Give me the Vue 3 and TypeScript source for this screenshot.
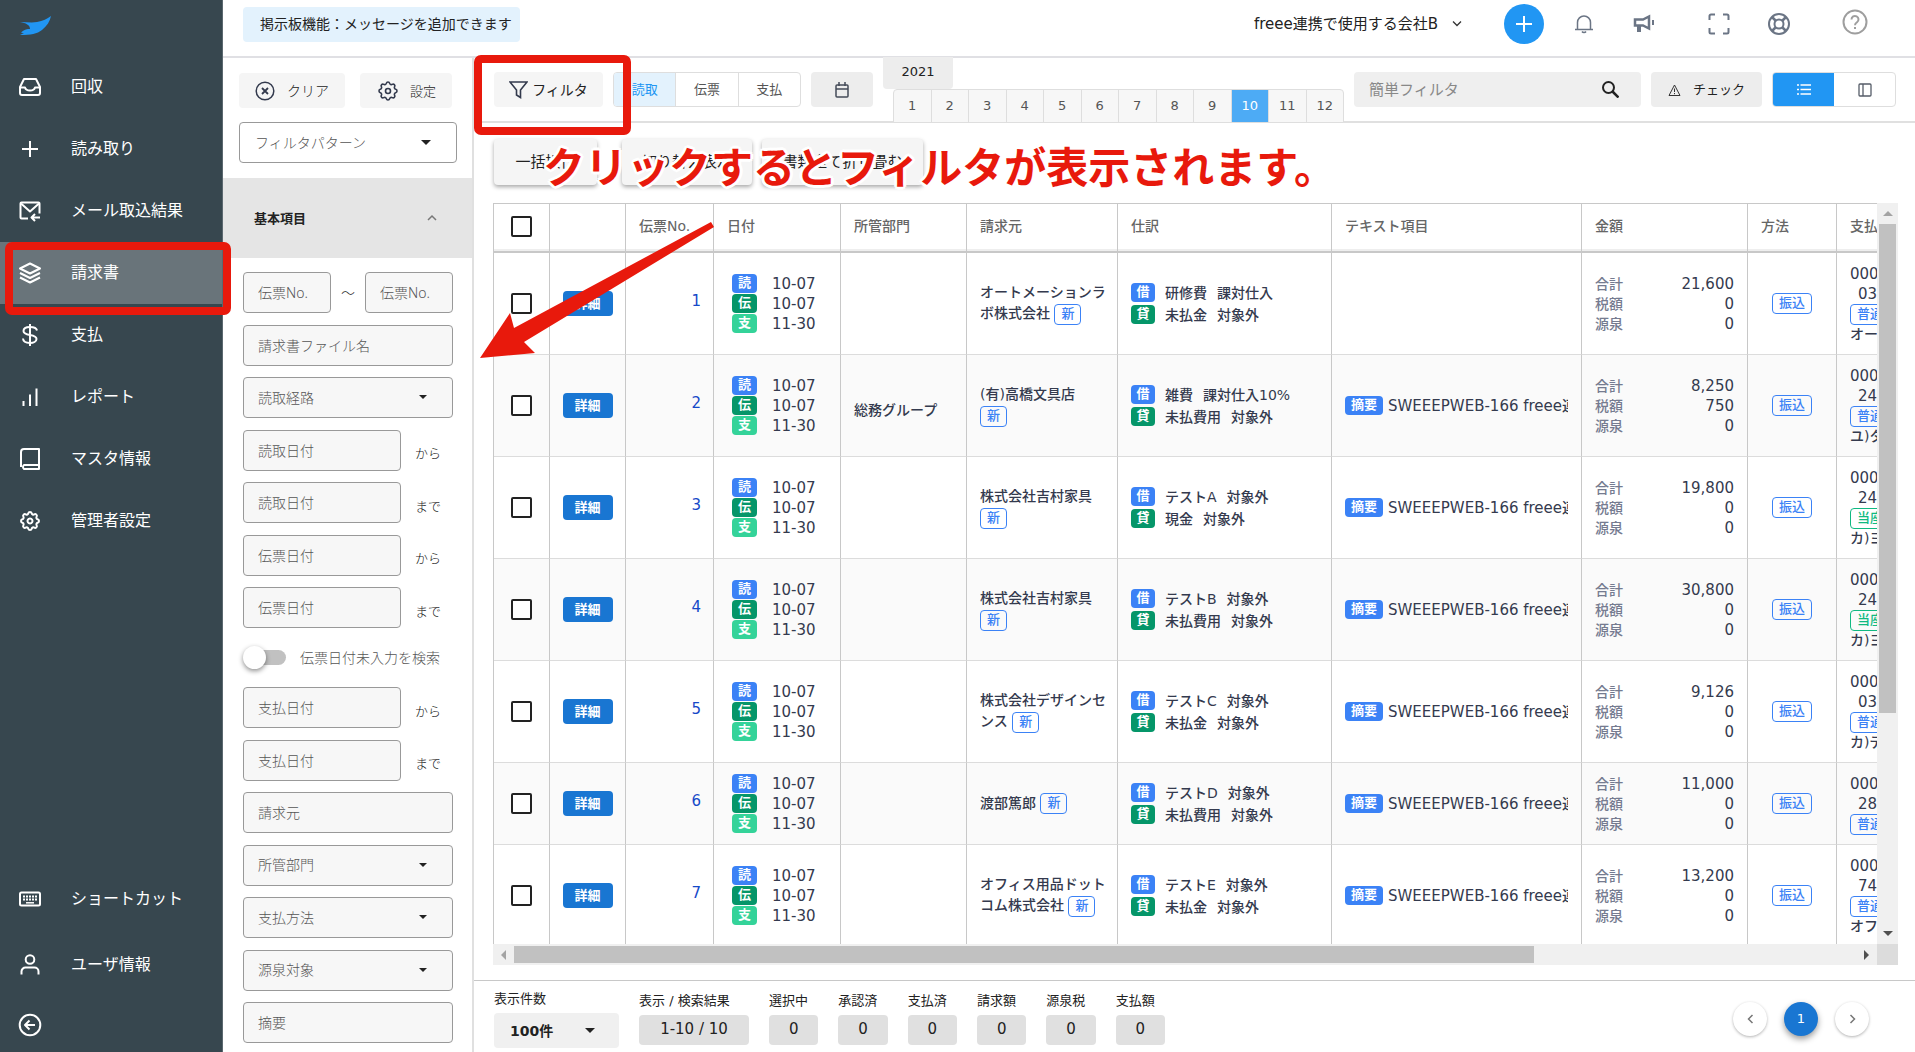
<script setup lang="ts">
import { ref } from 'vue'

interface NavItem {
  label: string
  paths: string[]
  active?: boolean
}

interface Row {
  no: number
  dept: string
  client: string
  debit: string[]
  credit: string[]
  memo: boolean
  amounts: string[]
  bank: string
  branch: string
  kind: string
  holder: string
  short?: boolean
}

const gear =
  'M10.325 4.317c.426-1.756 2.924-1.756 3.35 0a1.724 1.724 0 0 0 2.573 1.066c1.543-.94 3.31.826 2.37 2.37a1.724 1.724 0 0 0 1.065 2.572c1.756.426 1.756 2.924 0 3.35a1.724 1.724 0 0 0-1.066 2.573c.94 1.543-.826 3.31-2.37 2.37a1.724 1.724 0 0 0-2.572 1.065c-.426 1.756-2.924 1.756-3.35 0a1.724 1.724 0 0 0-2.573-1.066c-1.543.94-3.31-.826-2.37-2.37a1.724 1.724 0 0 0-1.065-2.572c-1.756-.426-1.756-2.924 0-3.35a1.724 1.724 0 0 0 1.066-2.573c-.94-1.543.826-3.31 2.37-2.37 1 .608 2.296.07 2.572-1.065z'

const mainNav: NavItem[] = [
  { label: '回収', paths: ['M6 4h12l4 8v6a2 2 0 0 1-2 2H4a2 2 0 0 1-2-2v-6z', 'M2 12.500h5c.5 1.800 1.500 3 5 3s4.500-1.200 5-3h5'] },
  { label: '読み取り', paths: ['M12 4v16M4 12h16'] },
  { label: 'メール取込結果', paths: ['M10 19.500H3.500a1 1 0 0 1-1-1v-14a1 1 0 0 1 1-1h17a1 1 0 0 1 1 1v10', 'M3 4.500l9 8 9-8', 'M22 18.500h-8M17 15l-3.500 3.500L17 22'] },
  { label: '請求書', paths: ['M12 2.500l10 5-10 5-10-5z', 'M2 12l10 5 10-5', 'M2 16.500l10 5 10-5'], active: true },
  { label: '支払', paths: ['M12 1v22', 'M19 7.500C18.500 5 15.500 4 12 4 8 4 5.500 5.500 5.500 8c0 5.500 13 2.500 13 8 0 2.500-3 4-6.500 4-4 0-6.800-1.500-7-4.500'] },
  { label: 'レポート', paths: ['M5.500 21v-5M12 21V9.500M18.500 21V3.500'] },
  { label: 'マスタ情報', paths: ['M21 18H6a2.500 2.500 0 0 0 0 4h15V2H6a3 3 0 0 0-3 3v15'] },
  { label: '管理者設定', paths: [gear, 'M12 9.500a2.500 2.500 0 1 0 .01 0z'] },
]

const months = Array.from({ length: 12 }, (_, i) => i + 1)
const activeMonth = ref(10)
const basis = ref('読取')

const rows: Row[] = [
  { no: 1, dept: '', client: 'オートメーションラ\nボ株式会社', debit: ['研修費', '課対仕入'], credit: ['未払金', '対象外'], memo: false, amounts: ['21,600', '0', '0'], bank: '0001', branch: '032', kind: '普通', holder: 'オート' },
  { no: 2, dept: '総務グループ', client: '(有)高橋文具店\n', debit: ['雑費', '課対仕入10%'], credit: ['未払費用', '対象外'], memo: true, amounts: ['8,250', '750', '0'], bank: '0001', branch: '240', kind: '普通', holder: 'ユ)タ' },
  { no: 3, dept: '', client: '株式会社吉村家具\n', debit: ['テストA', '対象外'], credit: ['現金', '対象外'], memo: true, amounts: ['19,800', '0', '0'], bank: '0001', branch: '240', kind: '当座', holder: 'カ)ヨ' },
  { no: 4, dept: '', client: '株式会社吉村家具\n', debit: ['テストB', '対象外'], credit: ['未払費用', '対象外'], memo: true, amounts: ['30,800', '0', '0'], bank: '0001', branch: '240', kind: '当座', holder: 'カ)ヨ' },
  { no: 5, dept: '', client: '株式会社デザインセ\nンス', debit: ['テストC', '対象外'], credit: ['未払金', '対象外'], memo: true, amounts: ['9,126', '0', '0'], bank: '0001', branch: '032', kind: '普通', holder: 'カ)デ' },
  { no: 6, dept: '', client: '渡部篤郎', debit: ['テストD', '対象外'], credit: ['未払費用', '対象外'], memo: true, amounts: ['11,000', '0', '0'], bank: '0001', branch: '280', kind: '普通', holder: '', short: true },
  { no: 7, dept: '', client: 'オフィス用品ドット\nコム株式会社', debit: ['テストE', '対象外'], credit: ['未払金', '対象外'], memo: true, amounts: ['13,200', '0', '0'], bank: '0001', branch: '740', kind: '普通', holder: 'オフィ' },
]

const dates = [
  { mark: '読', cls: 'blue', value: '10-07' },
  { mark: '伝', cls: 'green', value: '10-07' },
  { mark: '支', cls: 'mint', value: '11-30' },
]
const amountLabels = ['合計', '税額', '源泉']
const headings = ['伝票No.', '日付', '所管部門', '請求元', '仕訳', 'テキスト項目', '金額', '方法', '支払先']

const upperDates = [
  { label: '読取日付', suffix: 'から' },
  { label: '読取日付', suffix: 'まで' },
  { label: '伝票日付', suffix: 'から' },
  { label: '伝票日付', suffix: 'まで' },
]
const lowerDates = [
  { label: '支払日付', suffix: 'から' },
  { label: '支払日付', suffix: 'まで' },
]
const lowerSelects = ['所管部門', '支払方法', '源泉対象']
const totals = ['選択中', '承認済', '支払済', '請求額', '源泉税', '支払額']
</script>

<template>
  <div class="app">
    <aside class="sidebar">
      <a class="logo" href="#" aria-label="ホーム">
        <svg width="32" height="22" viewBox="0 0 32 22">
          <path d="M1 6c6 0 12 1 17 0 6-1 10-3 14-6-1 5-4 10-9 14-5 4-11 5-22 5l4-2c-1 0-2 0-3-.5 2-2 4-3 7-3.500l2 0c0-4-4-6-10-7z" fill="#2196f3" />
        </svg>
      </a>
      <nav class="nav">
        <a v-for="item in mainNav" :key="item.label" href="#" :class="['nav-item', { active: item.active }]">
          <svg class="nav-icon" viewBox="0 0 24 24"><path v-for="d in item.paths" :key="d" :d="d" /></svg>
          <span>{{ item.label }}</span>
        </a>
      </nav>
      <nav class="nav nav-bottom">
        <a href="#" class="nav-item">
          <svg class="nav-icon" viewBox="0 0 24 24">
            <rect x="2" y="5.500" width="20" height="13" rx="1.500" />
            <path d="M5 9.500h14M5 12.500h14" stroke-dasharray="2 1" /><path d="M8 15.800h8" stroke-width="1.500" />
          </svg>
          <span>ショートカット</span>
        </a>
        <a href="#" class="nav-item">
          <svg class="nav-icon" viewBox="0 0 24 24"><circle cx="12" cy="6.500" r="4.300" /><path d="M3.500 21.500v-3a4 4 0 0 1 4-4h9a4 4 0 0 1 4 4v3" /></svg>
          <span>ユーザ情報</span>
        </a>
        <a href="#" class="nav-item collapse" aria-label="メニューを閉じる">
          <svg class="nav-icon" viewBox="0 0 24 24"><circle cx="12" cy="12" r="10.300" /><path d="M17 12H7.500M11.500 7.500L7 12l4.500 4.500" /></svg>
        </a>
      </nav>
    </aside>

    <div class="page">
      <header class="topbar">
        <div class="notice">掲示板機能：メッセージを追加できます</div>
        <button class="company">
          freee連携で使用する会社B
          <svg width="10" height="8" viewBox="0 0 10 8"><path d="M1 1.500l4 4 4-4" fill="none" stroke="#333" stroke-width="1.300" /></svg>
        </button>
        <button class="add" aria-label="追加">
          <svg width="18" height="18" viewBox="0 0 18 18"><path d="M9 1v16M1 9h16" stroke="#fff" stroke-width="2" /></svg>
        </button>
        <div class="top-icons">
          <button aria-label="お知らせ">
            <svg width="20" height="20" viewBox="0 0 20 20" fill="none" stroke="#6b7585" stroke-width="1.500"><path d="M1 15.500h18M3.500 15V8.500a6.500 6.500 0 0 1 13 0V15" /><path d="M8 17.500c.8 1.300 3.200 1.300 4 0" /></svg>
          </button>
          <button aria-label="お知らせ一覧">
            <svg width="22" height="20" viewBox="0 0 22 20" fill="none" stroke="#6b7585" stroke-width="2.500"><path d="M2 5.500h8l6-3v12l-6-3H2z" /><path d="M6 11.500V18" stroke-width="4" /><path d="M20 6v5" stroke-width="2" /></svg>
          </button>
          <button class="screen" aria-label="全画面">
            <svg width="22" height="22" viewBox="0 0 22 22" fill="none" stroke="#6b7585" stroke-width="2"><path d="M1.500 7V3a1.500 1.500 0 0 1 1.500-1.500h4M15 1.500h4A1.500 1.500 0 0 1 20.500 3v4M20.500 15v4a1.500 1.500 0 0 1-1.500 1.500h-4M7 20.500H3A1.500 1.500 0 0 1 1.500 19v-4" /></svg>
          </button>
          <button aria-label="サポート">
            <svg width="22" height="22" viewBox="0 0 22 22" fill="none" stroke="#6b7585" stroke-width="2"><circle cx="11" cy="11" r="10" /><circle cx="11" cy="11" r="4.500" /><path d="M4 4l4 4M18 4l-4 4M4 18l4-4M18 18l-4-4" stroke-width="2.500" /></svg>
          </button>
          <button class="help" aria-label="ヘルプ">
            <svg width="26" height="26" viewBox="0 0 26 26" fill="none" stroke="#9e9e9e" stroke-width="2"><circle cx="13" cy="13" r="11.500" /><path d="M9.500 10.500a3.500 3.500 0 1 1 5.500 2.800c-1.300.9-2 1.500-2 3M13 18v2" /></svg>
          </button>
        </div>
      </header>

      <div class="body">
        <section class="filters">
          <div class="filter-actions">
            <button class="soft clear">
              <svg width="20" height="20" viewBox="0 0 20 20" fill="none" stroke="#333a4d" stroke-width="1.500"><circle cx="10" cy="10" r="8.800" /><path d="M7 7l6 6M13 7l-6 6" stroke-width="1.800" /></svg>
              クリア
            </button>
            <button class="soft config">
              <svg width="24" height="24" viewBox="0 0 24 24" fill="none" stroke="#333a4d" stroke-width="1.600"><path :d="gear" /><circle cx="12" cy="12" r="2.500" /></svg>
              設定
            </button>
          </div>
          <div class="select-wrap pattern">
            <select class="field" aria-label="フィルタパターン"><option>フィルタパターン</option></select>
            <svg class="caret" width="10" height="5" viewBox="0 0 10 5"><path d="M0 0h10L5 5z" /></svg>
          </div>
          <button class="section-head">
            基本項目
            <svg width="10" height="8" viewBox="0 0 10 8"><path d="M1 6l4-4 4 4" fill="none" stroke="#777" stroke-width="1.500" /></svg>
          </button>
          <div class="fields">
            <div class="pair">
              <input class="field" placeholder="伝票No." aria-label="伝票No. 開始" />
              <span>～</span>
              <input class="field" placeholder="伝票No." aria-label="伝票No. 終了" />
            </div>
            <input class="field" placeholder="請求書ファイル名" aria-label="請求書ファイル名" />
            <div class="select-wrap">
              <select class="field" aria-label="読取経路"><option>読取経路</option></select>
              <svg class="caret" width="8" height="4" viewBox="0 0 8 4"><path d="M0 0h8L4 4z" /></svg>
            </div>
            <label v-for="(d, i) in upperDates" :key="'u' + i" class="date">
              <input class="field" :placeholder="d.label" />
              <span>{{ d.suffix }}</span>
            </label>
            <label class="switch"><input type="checkbox" />伝票日付未入力を検索</label>
            <label v-for="(d, i) in lowerDates" :key="'l' + i" class="date">
              <input class="field" :placeholder="d.label" />
              <span>{{ d.suffix }}</span>
            </label>
            <input class="field" placeholder="請求元" aria-label="請求元" />
            <div v-for="s in lowerSelects" :key="s" class="select-wrap">
              <select class="field" :aria-label="s"><option>{{ s }}</option></select>
              <svg class="caret" width="8" height="4" viewBox="0 0 8 4"><path d="M0 0h8L4 4z" /></svg>
            </div>
            <input class="field" placeholder="摘要" aria-label="摘要" />
          </div>
        </section>

        <main class="main">
          <div class="toolbar">
            <button class="soft filter-toggle">
              <svg width="19" height="18" viewBox="0 0 19 18" fill="none" stroke="#333a4d" stroke-width="1.600"><path d="M1 1h17l-6.500 8v7.500L7.500 14V9z" /></svg>
              フィルタ
            </button>
            <div class="segment">
              <button v-for="b in ['読取', '伝票', '支払']" :key="b" :class="{ on: basis === b }" @click="basis = b">{{ b }}</button>
            </div>
            <button class="calendar" aria-label="カレンダー">
              <svg width="14" height="16" viewBox="0 0 14 16" fill="none" stroke="#444b58" stroke-width="1.500"><rect x="1" y="3" width="12" height="12" rx="1" /><path d="M1 7h12M4 0v4M10 0v4" /></svg>
            </button>
            <div class="period">
              <div class="year">2021</div>
              <div class="months">
                <button v-for="m in months" :key="m" :class="{ on: activeMonth === m }" @click="activeMonth = m">{{ m }}</button>
              </div>
            </div>
            <label class="search">
              <input placeholder="簡単フィルタ" aria-label="簡単フィルタ" />
              <svg width="17" height="17" viewBox="0 0 17 17" fill="none" stroke="#222" stroke-width="2"><circle cx="6.500" cy="6.500" r="5.500" /><path d="M10.500 10.500l6 6" stroke-width="2.500" /></svg>
            </label>
            <button class="check">
              <svg width="13" height="12" viewBox="0 0 13 12" fill="none" stroke="#333"><path d="M6.500 1L12 11.500H1zM6.500 4.500V8M6.500 9v1.200" /></svg>
              チェック
            </button>
            <div class="views">
              <button class="on" aria-label="一覧表示">
                <svg width="14" height="11" viewBox="0 0 14 11" stroke="#fff" stroke-width="1.500"><path d="M0 1h2M0 5.500h2M0 10h2M3.500 1H14M3.500 5.500H14M3.500 10H14" /></svg>
              </button>
              <button aria-label="分割表示">
                <svg width="14" height="14" viewBox="0 0 14 14" fill="none" stroke="#555c68" stroke-width="1.300"><rect x="1" y="1" width="12" height="12" rx="1" /><path d="M5 1v12" /></svg>
              </button>
            </div>
          </div>

          <div class="content">
            <div class="bulk">
              <button class="b1">一括操作</button>
              <button class="b2">切り替え表示</button>
              <button class="b3">書類全て折り畳む</button>
            </div>

            <div class="grid">
              <div class="viewport">
                <table>
                  <colgroup>
                    <col class="w-check" /><col class="w-detail" /><col class="w-no" /><col class="w-date" /><col class="w-dept" />
                    <col class="w-client" /><col class="w-journal" /><col class="w-text" /><col class="w-amount" /><col class="w-method" /><col class="w-payee" />
                  </colgroup>
                  <thead>
                    <tr>
                      <th class="c"><input type="checkbox" aria-label="すべて選択" /></th>
                      <th></th>
                      <th v-for="h in headings" :key="h">{{ h }}</th>
                    </tr>
                  </thead>
                  <tbody>
                    <tr v-for="r in rows" :key="r.no" :class="{ short: r.short }">
                      <td class="c"><input type="checkbox" :aria-label="`${r.no} を選択`" /></td>
                      <td class="c"><button class="detail">詳細</button></td>
                      <td class="no">{{ r.no }}</td>
                      <td class="dates">
                        <div v-for="d in dates" :key="d.mark" class="date-line"><span :class="['mark', d.cls]">{{ d.mark }}</span>{{ d.value }}</div>
                      </td>
                      <td class="dept">{{ r.dept }}</td>
                      <td class="client">{{ r.client }} <span class="tag">新</span></td>
                      <td>
                        <div class="journal"><span class="mark blue">借</span><span>{{ r.debit[0] }}</span><span>{{ r.debit[1] }}</span></div>
                        <div class="journal"><span class="mark green">貸</span><span>{{ r.credit[0] }}</span><span>{{ r.credit[1] }}</span></div>
                      </td>
                      <td>
                        <div v-if="r.memo" class="memo"><span class="mark blue">摘要</span><span class="memo-text">SWEEEPWEB-166 freee連携</span></div>
                      </td>
                      <td>
                        <div v-for="(a, i) in r.amounts" :key="i" class="amount"><span>{{ amountLabels[i] }}</span><b>{{ a }}</b></div>
                      </td>
                      <td class="c"><span class="tag">振込</span></td>
                      <td class="payee">
                        <div>{{ r.bank }}</div>
                        <div class="branch">{{ r.branch }}</div>
                        <div><span :class="['tag', { teal: r.kind === '当座' }]">{{ r.kind }}</span></div>
                        <div v-if="r.holder" class="holder">{{ r.holder }}</div>
                      </td>
                    </tr>
                  </tbody>
                </table>
              </div>
              <div class="bar vertical" aria-hidden="true">
                <svg width="10" height="5" viewBox="0 0 10 5"><path d="M0 5h10L5 0z" fill="#a3a3a3" /></svg>
                <div class="track"><div class="thumb"></div></div>
                <svg width="10" height="5" viewBox="0 0 10 5"><path d="M0 0h10L5 5z" fill="#505050" /></svg>
              </div>
              <div class="bar horizontal" aria-hidden="true">
                <svg width="5" height="10" viewBox="0 0 5 10"><path d="M5 0v10L0 5z" fill="#a3a3a3" /></svg>
                <div class="track"><div class="thumb"></div></div>
                <svg width="5" height="10" viewBox="0 0 5 10"><path d="M0 0v10l5-5z" fill="#505050" /></svg>
              </div>
              <div class="corner"></div>
            </div>
          </div>

          <footer class="footer">
            <div class="page-size">
              <label for="size">表示件数</label>
              <div class="select-wrap">
                <select id="size"><option>100件</option></select>
                <svg class="caret" width="10" height="5" viewBox="0 0 10 5"><path d="M0 0h10L5 5z" /></svg>
              </div>
            </div>
            <div class="stat result"><span>表示 / 検索結果</span><output>1-10 / 10</output></div>
            <div class="totals">
              <div v-for="t in totals" :key="t" class="stat"><span>{{ t }}</span><output>0</output></div>
            </div>
            <nav class="pager" aria-label="ページ">
              <button aria-label="前へ"><svg width="7" height="10" viewBox="0 0 7 10"><path d="M5.500 1l-4 4 4 4" fill="none" stroke="#777" stroke-width="1.500" /></svg></button>
              <button class="on">1</button>
              <button aria-label="次へ"><svg width="7" height="10" viewBox="0 0 7 10"><path d="M1.500 1l4 4-4 4" fill="none" stroke="#777" stroke-width="1.500" /></svg></button>
            </nav>
          </footer>
        </main>
      </div>
    </div>

    <div class="guide">
      <div class="frame frame-menu"></div>
      <div class="frame frame-filter"></div>
      <svg class="arrow" width="236" height="138" viewBox="0 0 236 138"><path d="M231 1l3 5L44 121l11 11L0 137l30-45 4 15z" fill="#e8190c" /></svg>
      <p class="callout">クリックするとフィルタが表示されます。</p>
    </div>
  </div>
</template>

<style>
body {
  margin: 0;
}
</style>

<style scoped>
.app {
  position: relative;
  display: flex;
  height: 100vh;
  overflow: hidden;
  background: #fff;
  color: #222;
  font-family: 'DejaVu Sans', 'Noto Sans CJK JP', sans-serif;
  font-size: 14px;
  line-height: 20px;
}
.app *,
.app *::before {
  box-sizing: border-box;
}
button,
input,
select {
  margin: 0;
  font: inherit;
  color: inherit;
}
button {
  display: flex;
  align-items: center;
  justify-content: center;
  padding: 0;
  border: 0;
  background: none;
  cursor: pointer;
  white-space: nowrap;
}
svg {
  flex: none;
}

/* sidebar */
.sidebar {
  display: flex;
  flex: none;
  flex-direction: column;
  width: 223px;
  border-right: 1px solid #5b686f;
  background: #37474f;
}
.logo {
  height: 56px;
  padding: 16px 0 0 19px;
}
.nav-item {
  display: flex;
  align-items: center;
  gap: 29px;
  height: 62px;
  padding-left: 18px;
  color: #fff;
  font-size: 16px;
  text-decoration: none;
}
.nav-item.active {
  background: #69747a;
}
.nav-icon {
  width: 24px;
  height: 24px;
  fill: none;
  stroke: #fff;
  stroke-width: 2;
  stroke-linejoin: round;
}
.nav-bottom {
  margin-top: auto;
}
.nav-bottom .nav-item {
  height: 66px;
}
.nav-bottom .collapse {
  height: 54px;
}

/* top bar */
.page {
  display: flex;
  flex: 1;
  flex-direction: column;
  min-width: 0;
}
.topbar {
  display: flex;
  flex: none;
  align-items: center;
  height: 58px;
  padding: 0 30px 8px 20px;
  border-bottom: 2px solid #e0e0e4;
}
.notice {
  height: 35px;
  padding: 0 8px 0 17px;
  border-radius: 4px;
  background: #e3f2fd;
  line-height: 34px;
}
.company {
  gap: 14px;
  margin-left: auto;
  font-size: 15px;
}
.add {
  width: 40px;
  height: 40px;
  margin-left: 42px;
  border-radius: 50%;
  background: #2196f3;
}
.top-icons {
  display: flex;
  align-items: center;
  margin-left: 10px;
}
.top-icons button {
  width: 60px;
}
.top-icons .screen {
  margin-left: 15px;
}
.top-icons .help {
  margin: 0 0 4px 16px;
}

.body {
  display: flex;
  flex: 1;
  min-height: 0;
}

/* filter column */
.filters {
  display: flex;
  flex: none;
  flex-direction: column;
  width: 251px;
  padding-top: 15px;
  border-right: 2px solid #e0e0e0;
  font-family: 'Noto Sans', 'Noto Sans CJK JP', sans-serif;
  font-weight: 300;
}
.filter-actions {
  display: flex;
  gap: 15px;
  padding-left: 16px;
}
.soft {
  height: 35px;
  border-radius: 4px;
  background: #f5f5f5;
}
.clear {
  gap: 12px;
  width: 106px;
}
.config {
  gap: 10px;
  width: 92px;
  font-size: 13px;
}
.field {
  display: block;
  width: 100%;
  min-width: 0;
  height: 41px;
  padding: 0 14px;
  border: 1px solid #999;
  border-radius: 4px;
  background: #f7f7f7;
  color: #555;
  appearance: none;
}
.field::placeholder {
  color: #555;
  opacity: 1;
}
.select-wrap {
  position: relative;
}
.select-wrap .caret {
  position: absolute;
  top: 18px;
  right: 26px;
  fill: #222;
  pointer-events: none;
}
.pattern {
  width: 218px;
  margin: 14px 0 15px 16px;
}
.pattern .field {
  padding-left: 15px;
  background: #fff;
}
.section-head {
  flex: none;
  justify-content: space-between;
  width: 100%;
  height: 80px;
  padding: 0 35px 0 31px;
  background: #e5e5e5;
  font-size: 13px;
  font-weight: 700;
}
.fields {
  display: flex;
  flex: 1;
  flex-direction: column;
  justify-content: space-between;
  min-height: 0;
  padding: 14px 19px 9px 20px;
}
.fields > .field,
.fields > .date,
.fields > .pair {
  flex: none;
}
.pair {
  display: flex;
  align-items: center;
  justify-content: space-between;
}
.pair .field {
  width: 88px;
}
.date {
  display: flex;
  align-items: center;
  gap: 14px;
}
.date .field {
  width: 158px;
}
.date span {
  padding-top: 6px;
  font-size: 13px;
}
.switch {
  display: flex;
  align-items: center;
  gap: 14px;
  height: 36px;
  color: #555;
}
.switch input {
  display: flex;
  align-items: center;
  width: 43px;
  height: 15px;
  border-radius: 8px;
  background: linear-gradient(90deg, transparent 12px, #c1c1c1 12px);
  appearance: none;
}
.switch input::before {
  width: 23px;
  height: 23px;
  border-radius: 50%;
  background: #fff;
  box-shadow: 0 2px 5px rgba(0, 0, 0, 0.45);
  content: '';
}

/* toolbar */
.main {
  display: flex;
  flex: 1;
  flex-direction: column;
  min-width: 0;
}
.toolbar {
  display: flex;
  flex: none;
  gap: 10px;
  height: 65px;
  padding: 14px 19px 0 20px;
  border-bottom: 2px solid #e0e0e0;
}
.filter-toggle {
  gap: 4px;
  width: 109px;
}
.segment,
.views {
  display: flex;
  flex: none;
  height: 35px;
  border: 1px solid #dedede;
  border-radius: 4px;
  overflow: hidden;
}
.segment {
  width: 188px;
}
.segment button {
  flex: 1;
  border-left: 1px solid #dedede;
  color: #555;
  font-size: 13px;
}
.segment button:first-child {
  border-left: 0;
}
.segment .on {
  background: #e3f2fd;
  color: #2196f3;
}
.calendar {
  width: 62px;
  height: 35px;
  border-radius: 4px;
  background: #ededed;
}
.period {
  display: flex;
  flex: none;
  flex-direction: column;
  width: 461px;
  height: 66px;
  margin-top: -15px;
}
.year {
  width: 70px;
  height: 32px;
  border-radius: 0 0 4px 4px;
  background: #ededed;
  font-size: 13px;
  line-height: 29px;
  text-align: center;
}
.months {
  display: flex;
  flex: none;
  height: 34px;
  margin-left: 10px;
  border: 1px solid #dedede;
  border-radius: 4px 4px 0 0;
  background: #f7f7f7;
}
.months button {
  flex: 1;
  border-right: 1px solid #dedede;
  color: #555;
  font-size: 13px;
}
.months button:last-child {
  border-right: 0;
}
.months .on {
  background: #4dabf5;
  color: #fff;
}
.search {
  display: flex;
  flex: 1;
  align-items: center;
  height: 35px;
  padding: 0 22px 0 15px;
  border-radius: 4px;
  background: #efefef;
}
.search input {
  flex: 1;
  min-width: 0;
  padding: 0;
  border: 0;
  background: none;
  font-size: 15px;
}
.search input::placeholder {
  color: #888;
  opacity: 1;
}
.check {
  gap: 12px;
  width: 111px;
  height: 35px;
  border-radius: 4px;
  background: #ededed;
  font-size: 13px;
}
.views button {
  width: 61px;
}
.views .on {
  background: #2196f3;
}

/* table area */
.content {
  display: flex;
  flex: 1;
  flex-direction: column;
  gap: 18px;
  min-height: 0;
  padding: 16px 17px 15px 19px;
}
.bulk {
  display: flex;
  flex: none;
  gap: 10px;
  padding-left: 1px;
}
.bulk button {
  height: 46px;
  border-radius: 4px;
  background: #f5f5f5;
  box-shadow: 0 2px 4px rgba(0, 0, 0, 0.35);
  font-size: 15px;
}
.bulk .b1 {
  width: 103px;
  margin-right: 15px;
}
.bulk .b2 {
  width: 130px;
}
.bulk .b3 {
  width: 161px;
}
.grid {
  display: grid;
  flex: 1;
  grid-template-rows: minmax(0, 1fr) 21px;
  grid-template-columns: minmax(0, 1fr) 21px;
  min-height: 0;
}
.viewport {
  overflow: hidden;
  border-top: 1px solid #c8c8c8;
  border-left: 1px solid #c8c8c8;
}
table {
  width: 1500px;
  border-spacing: 0;
  table-layout: fixed;
  color: #343a4e;
  font-weight: 500;
}
.w-check { width: 56px; }
.w-detail { width: 76px; }
.w-no { width: 88px; }
.w-date { width: 127px; }
.w-dept { width: 126px; }
.w-client { width: 151px; }
.w-journal { width: 214px; }
.w-text { width: 250px; }
.w-amount { width: 166px; }
.w-method { width: 89px; }
th,
td {
  padding: 0 13px;
  border-right: 1px solid #c8c8c8;
  text-align: left;
  white-space: nowrap;
}
th,
th.c {
  height: 49px;
  padding-bottom: 3px;
  border-bottom: 2px solid #c8c8c8;
  box-shadow: inset 0 -3px 0 -1px #eee;
  color: #666;
  font-weight: 500;
}
td {
  height: 102px;
  border-bottom: 1px solid #dcdcdc;
  overflow: hidden;
}
.short td {
  height: 82px;
}
tbody tr:nth-child(even) {
  background: #fafafa;
}
.c {
  padding: 0;
  text-align: center;
}
.c input {
  display: block;
  width: 21px;
  height: 21px;
  margin: 0 auto;
  border: 2px solid #222;
  border-radius: 2px;
  background: #fff;
  appearance: none;
}
.detail {
  width: 50px;
  height: 25px;
  margin: 0 auto;
  border-radius: 4px;
  background: #1976d2;
  color: #fff;
  font-size: 13px;
  font-weight: 700;
}
td.no {
  padding-right: 12px;
  padding-bottom: 6px;
  color: #1549c8;
  font-size: 15px;
  text-align: right;
}
td.dates {
  padding-left: 18px;
  font-size: 15px;
}
.date-line {
  display: flex;
  align-items: center;
  gap: 15px;
  height: 20px;
}
.mark {
  display: inline-block;
  flex: none;
  width: 25px;
  height: 19px;
  border-radius: 4px;
  color: #fff;
  font-size: 13px;
  font-weight: 700;
  line-height: 18px;
  text-align: center;
}
.blue { background: #3b82f6; }
.green { background: #059669; }
.mint { background: #34d399; }
td.dept {
  padding-top: 8px;
}
td.client {
  padding-right: 6px;
  line-height: 21px;
  white-space: pre-line;
}
.tag {
  display: inline-block;
  height: 21px;
  padding: 0 6px;
  border: 1px solid #3b82f6;
  border-radius: 4px;
  color: #3b82f6;
  font-size: 13px;
  line-height: 18px;
  vertical-align: middle;
}
.tag.teal {
  border-color: #10b981;
  color: #10b981;
}
.journal {
  display: flex;
  align-items: center;
  gap: 10px;
  height: 22px;
}
.journal .mark {
  width: 24px;
}
.memo {
  display: flex;
  align-items: center;
  gap: 5px;
  overflow: hidden;
}
.memo .mark {
  width: 38px;
}
.memo-text {
  font-size: 15px;
}
.amount {
  display: flex;
  justify-content: space-between;
  height: 20px;
  color: #757b90;
}
.amount b {
  color: #343a4e;
  font-size: 15px;
  font-weight: 500;
}
.payee {
  font-size: 15px;
}
.payee div {
  height: 20px;
}
.payee .branch {
  padding-left: 8px;
}
.payee .holder {
  font-size: 14px;
}
.bar {
  display: flex;
  align-items: center;
  background: #f0f0f0;
}
.vertical {
  flex-direction: column;
  padding: 8px 0;
}
.horizontal {
  padding: 0 8px;
}
.track {
  display: flex;
  flex: 1;
  margin: 8px 2px;
}
.vertical .track {
  width: 17px;
}
.horizontal .track {
  height: 17px;
  margin: 2px 8px;
}
.thumb {
  background: #c1c1c1;
}
.vertical .thumb {
  width: 17px;
  height: 70%;
}
.horizontal .thumb {
  width: 76%;
}
.corner {
  background: #dcdcdc;
}

/* footer */
.footer {
  display: flex;
  flex: none;
  align-items: flex-start;
  gap: 20px;
  height: 72px;
  padding: 8px 46px 0 20px;
  border-top: 1px solid #c8c8c8;
  font-size: 13px;
}
.page-size {
  display: flex;
  flex-direction: column;
  gap: 4px;
  width: 125px;
}
.page-size select {
  display: block;
  width: 100%;
  height: 35px;
  padding: 0 16px;
  border: 0;
  border-radius: 4px;
  background: #f0f0f0;
  font-size: 14px;
  font-weight: 700;
  appearance: none;
}
.page-size .caret {
  top: 15px;
  right: 24px;
}
.stat {
  display: flex;
  flex: 1;
  flex-direction: column;
  gap: 4px;
  padding-top: 2px;
  white-space: nowrap;
}
.stat output {
  height: 30px;
  border-radius: 4px;
  background: #e0e0e0;
  font-size: 15px;
  line-height: 29px;
  text-align: center;
}
.result {
  flex: none;
  width: 110px;
}
.totals {
  display: flex;
  gap: 20px;
  width: 396px;
}
.pager {
  display: flex;
  gap: 17px;
  margin: 13px 0 0 auto;
}
.pager button {
  width: 34px;
  height: 34px;
  border-radius: 50%;
  background: #fff;
  box-shadow: 0 1px 3px rgba(0, 0, 0, 0.3);
}
.pager .on {
  background: #1976d2;
  box-shadow: 0 3px 6px rgba(0, 0, 0, 0.4);
  color: #fff;
}

/* guide marks that lie over the screen */
.guide {
  position: absolute;
  inset: 0;
  pointer-events: none;
}
.frame {
  position: absolute;
  border: 8px solid #e8190c;
  border-radius: 7px;
}
.frame-menu {
  top: 242px;
  left: 5px;
  width: 226px;
  height: 73px;
}
.frame-filter {
  top: 55px;
  left: 474px;
  width: 157px;
  height: 80px;
}
.arrow {
  position: absolute;
  top: 221px;
  left: 480px;
}
.callout {
  position: absolute;
  top: 145px;
  left: 543px;
  margin: 0;
  color: #e8190c;
  font-size: 42px;
  font-weight: 700;
  line-height: 48px;
  white-space: nowrap;
  text-shadow: 3px 0 #fff, -3px 0 #fff, 0 3px #fff, 0 -3px #fff, 2px 2px #fff, -2px 2px #fff, 2px -2px #fff, -2px -2px #fff;
}
</style>
